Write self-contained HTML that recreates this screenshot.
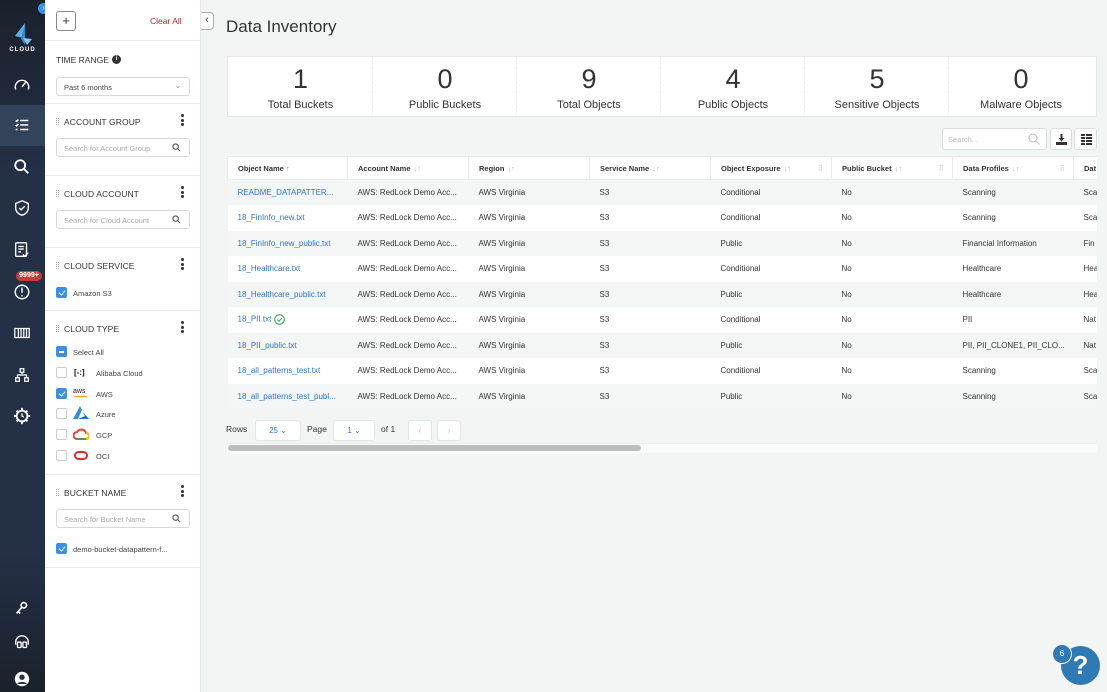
<!DOCTYPE html>
<html><head><meta charset="utf-8"><style>
*{box-sizing:border-box;margin:0;padding:0}
body{width:1107px;height:692px;overflow:hidden;background:#f3f4f4;font-family:"Liberation Sans",sans-serif;color:#333;position:relative}
.a{position:absolute}
#nav{left:0;top:0;width:45px;height:692px;background:linear-gradient(#1b212b 0%,#243046 25%,#243046 80%,#1b212b 100%)}
.ic{position:absolute;left:13px;width:18px;height:18px}
#fp{left:45px;top:0;width:156px;height:692px;background:#fff;border-right:1px solid #e4e6e8}
.hr{position:absolute;left:0;width:155px;height:1px;background:#e8eaeb}
.lbl{position:absolute;left:19px;font-size:8.5px;color:#333;letter-spacing:.1px}
.grip{position:absolute;left:11px;width:3px;height:7px;border-left:1px dotted #aaa;border-right:1px dotted #aaa}
.dots{position:absolute;left:136px;width:3px;font-size:0}
.dots i{display:block;width:3px;height:3px;border-radius:50%;background:#333;margin-bottom:1.5px}
.sb{position:absolute;left:11px;width:134px;height:19px;border:1px solid #d6d9dc;border-radius:3px;font-size:7.5px;color:#aaa;padding:5px 7px}
.sb svg{position:absolute;right:8px;top:4px}
.cb{position:absolute;left:11px;width:11px;height:11px;border:1px solid #ccc;border-radius:2px;background:#fff}
.cb.on{background:#3d8fe6;border-color:#3d8fe6}
.cb.on.k:after{content:"";position:absolute;left:3px;top:1px;width:3px;height:5px;border:solid #fff;border-width:0 1.2px 1.2px 0;transform:rotate(40deg)}
.ct{position:absolute;font-size:7.5px;color:#444}
.card{left:227px;top:56px;width:870px;height:61px;background:#fff;border:1px solid #e6e8e8}
.st{position:absolute;top:0;width:145px;height:61px;text-align:center}
.st b{display:block;font-weight:normal;font-size:27px;color:#333;margin-top:6px;line-height:32px}
.st span{font-size:11px;color:#333}
.st+.st{border-left:1px dashed #ececec}
table{position:absolute;left:227px;top:156px;border-collapse:collapse;font-size:8px;table-layout:fixed;width:880px}
td,th{height:25.5px;padding-left:10px;text-align:left;white-space:nowrap;overflow:hidden;color:#333}
th{height:23px;font-weight:bold;font-size:7.5px;background:#fff;border:1px solid #ececec;border-top:1px solid #e6e8e8}
tr:nth-child(odd) td{background:#fff}
tr:nth-child(even) td{background:#f4f5f5}
td.l{color:#2f74c9}
.s{color:#bbb;font-weight:normal;margin-left:3px}
.g{float:right;margin-right:8px;color:#ccc;font-weight:normal}
.pb{background:#fff;border:1px solid #e3e5e6;border-radius:3px;font-size:8px;color:#2f74c9;text-align:center}
</style></head><body>
<div id="nav" class="a">
 <div class="a" style="left:38px;top:3px;width:11px;height:11px;border-radius:50%;background:#3d8fe6;color:#fff;font-size:7px;text-align:center;line-height:11px">›</div>
 <svg class="a" style="left:13px;top:22px" width="20" height="26" viewBox="0 0 20 26"><path d="M12 1 L2 14 L10 16 Z" fill="#5ab0e6"/><path d="M12 1 L12 23 L8 17 Z" fill="#3a88c8"/><path d="M10 16 L19 17 L14 23 Z" fill="#7cc8f0"/></svg>
 <div class="a" style="left:0;width:45px;top:47px;text-align:center;color:#fff;font-size:6px;letter-spacing:1px;font-weight:bold">CLOUD</div>
 <div class="a" style="left:0;top:105px;width:45px;height:41px;background:#33435a"></div>
 <svg class="ic" style="top:76px" viewBox="0 0 20 20" fill="none" stroke="#fff" stroke-width="1.6"><path d="M3 15 A7.5 7.5 0 1 1 17 15"/><path d="M10 12 L14 7"/></svg>
 <svg class="ic" style="top:116px" viewBox="0 0 20 20" fill="none" stroke="#fff" stroke-width="1.6"><path d="M8 5h9M8 10h9M8 15h9M3 5l1 1 2-2M3 10l1 1 2-2M3 15h2"/></svg>
 <svg class="ic" style="top:158px" viewBox="0 0 20 20" fill="none" stroke="#fff" stroke-width="2"><circle cx="8" cy="8" r="5.5"/><path d="M12 12l5 5"/></svg>
 <svg class="ic" style="top:199px" viewBox="0 0 20 20" fill="none" stroke="#fff" stroke-width="1.5"><path d="M10 2l7 3v5c0 4-3 7-7 8-4-1-7-4-7-8V5z"/><path d="M7 10l2 2 4-4"/></svg>
 <svg class="ic" style="top:241px" viewBox="0 0 20 20" fill="none" stroke="#fff" stroke-width="1.5"><rect x="3" y="2" width="12" height="15" rx="1"/><path d="M6 6h6M6 9h6M6 12h3M11 15l2 2 4-4"/></svg>
 <div class="a" style="left:16px;top:271px;width:26px;height:10px;border-radius:5px;background:#d0393b;color:#fff;font-size:7px;font-weight:bold;text-align:center;line-height:10px">9999+</div>
 <svg class="ic" style="top:283px" viewBox="0 0 20 20" fill="none" stroke="#fff" stroke-width="1.6"><circle cx="10" cy="10" r="7.5"/><path d="M10 5v6M10 13.5v1.5"/></svg>
 <svg class="ic" style="top:324px" viewBox="0 0 20 20" fill="none" stroke="#fff" stroke-width="1.4"><rect x="2" y="5" width="16" height="10"/><path d="M6 5v10M9 5v10M12 5v10M15 5v10"/></svg>
 <svg class="ic" style="top:366px" viewBox="0 0 20 20" fill="none" stroke="#fff" stroke-width="1.4"><rect x="8" y="3" width="4" height="4"/><rect x="3" y="13" width="4" height="4"/><rect x="13" y="13" width="4" height="4"/><path d="M10 7v3M5 13v-3h10v3"/></svg>
 <svg class="ic" style="top:407px" viewBox="0 0 20 20" fill="none" stroke="#fff" stroke-width="2"><circle cx="10" cy="10" r="6"/><path d="M10 1v3M10 16v3M1 10h3M16 10h3M4 4l2 2M14 14l2 2M4 16l2-2M14 6l2-2"/><path d="M10 7v3l2 1" stroke-width="1.4"/></svg>
 <svg class="ic" style="top:599px" viewBox="0 0 20 20" fill="none" stroke="#fff" stroke-width="1.8"><circle cx="12" cy="7" r="3"/><path d="M10 9l-6 7M6 14l2 2"/></svg>
 <svg class="ic" style="top:634px" viewBox="0 0 20 20" fill="none" stroke="#fff" stroke-width="1.5"><path d="M3 12V9a7 7 0 0 1 14 0v3"/><rect x="5" y="9" width="4" height="6" rx="1"/><rect x="11" y="9" width="4" height="6" rx="1"/></svg>
 <svg class="ic" style="top:670px" viewBox="0 0 20 20"><circle cx="10" cy="10" r="8" fill="#fff"/><circle cx="10" cy="8" r="3" fill="#25324a"/><path d="M4.5 15.5c2-3 9-3 11 0" fill="#25324a"/></svg>
</div>

<div id="fp" class="a">
 <div class="a" style="left:11px;top:11px;width:20px;height:20px;border:1px solid #888;border-radius:3px;text-align:center;font-size:13px;line-height:17px;color:#333">+</div>
 <div class="a" style="left:105px;top:16px;font-size:8.5px;color:#b02a2f">Clear All</div>
 <div class="hr" style="top:40px"></div>
 <div class="a" style="left:11px;top:55px;font-size:8.5px">TIME RANGE</div>
 <div class="a" style="left:67px;top:55px;width:9px;height:9px;border-radius:50%;background:#333;color:#fff;font-size:6px;text-align:center;line-height:9px;font-weight:bold">i</div>
 <div class="sb" style="top:77px;color:#444">Past 6 months<span style="position:absolute;right:8px;top:3px;color:#3d8fe6">⌄</span></div>
 <div class="hr" style="top:103px"></div>
 <div class="grip" style="top:118px"></div><div class="lbl" style="top:117px">ACCOUNT GROUP</div>
 <div class="dots" style="top:114px"><i></i><i></i><i></i></div>
 <div class="sb" style="top:138px">Search for Account Group<svg width="9" height="9" viewBox="0 0 10 10" fill="none" stroke="#555" stroke-width="1.2"><circle cx="4" cy="4" r="3"/><path d="M6.3 6.3L9 9"/></svg></div>
 <div class="hr" style="top:175px"></div>
 <div class="grip" style="top:190px"></div><div class="lbl" style="top:189px">CLOUD ACCOUNT</div>
 <div class="dots" style="top:186px"><i></i><i></i><i></i></div>
 <div class="sb" style="top:210px">Search for Cloud Account<svg width="9" height="9" viewBox="0 0 10 10" fill="none" stroke="#555" stroke-width="1.2"><circle cx="4" cy="4" r="3"/><path d="M6.3 6.3L9 9"/></svg></div>
 <div class="hr" style="top:247px"></div>
 <div class="grip" style="top:262px"></div><div class="lbl" style="top:261px">CLOUD SERVICE</div>
 <div class="dots" style="top:258px"><i></i><i></i><i></i></div>
 <div class="cb on k" style="top:287px"></div><div class="ct" style="left:28px;top:289px">Amazon S3</div>
 <div class="hr" style="top:310px"></div>
 <div class="grip" style="top:325px"></div><div class="lbl" style="top:324px">CLOUD TYPE</div>
 <div class="dots" style="top:321px"><i></i><i></i><i></i></div>
 <div class="cb on" style="top:346px"><div style="width:5px;height:1.5px;background:#fff;margin:4px 2px"></div></div><div class="ct" style="left:28px;top:348px">Select All</div>
 <div class="cb" style="top:367px"></div><div class="ct" style="left:29px;top:368px;font-weight:bold;font-size:8px;color:#111">[-:]</div><div class="ct" style="left:51px;top:369px">Alibaba Cloud</div>
 <div class="cb on k" style="top:388px"></div><div class="ct" style="left:28px;top:388px;font-size:7px;color:#222">aws<div style="width:15px;height:2px;border-bottom:1.5px solid #f90;border-radius:50%"></div></div><div class="ct" style="left:51px;top:390px">AWS</div>
 <div class="cb" style="top:408px"></div><svg class="a" style="left:28px;top:406px" width="16" height="14" viewBox="0 0 16 14"><path d="M7 0L0 13h5L9 4z" fill="#3a8bd6"/><path d="M9 5l7 8H5l7-3z" fill="#1f6fc1"/></svg><div class="ct" style="left:51px;top:410px">Azure</div>
 <div class="cb" style="top:429px"></div><svg class="a" style="left:28px;top:428px" width="16" height="12" viewBox="0 0 16 12"><path d="M4 11a3.5 3.5 0 0 1 0-7a5 5 0 0 1 9 1a3 3 0 0 1 0 6z" fill="none" stroke="#ea4335" stroke-width="2"/><path d="M4 11h9" stroke="#34a853" stroke-width="2"/><path d="M13 5a3 3 0 0 1 0 6" stroke="#fbbc05" stroke-width="2" fill="none"/></svg><div class="ct" style="left:51px;top:431px">GCP</div>
 <div class="cb" style="top:450px"></div><div class="a" style="left:29px;top:451px;width:14px;height:9px;border:2px solid #d2332b;border-radius:5px"></div><div class="ct" style="left:51px;top:452px">OCI</div>
 <div class="hr" style="top:474px"></div>
 <div class="grip" style="top:489px"></div><div class="lbl" style="top:488px">BUCKET NAME</div>
 <div class="dots" style="top:485px"><i></i><i></i><i></i></div>
 <div class="sb" style="top:509px">Search for Bucket Name<svg width="9" height="9" viewBox="0 0 10 10" fill="none" stroke="#555" stroke-width="1.2"><circle cx="4" cy="4" r="3"/><path d="M6.3 6.3L9 9"/></svg></div>
 <div class="cb on k" style="top:543px"></div><div class="ct" style="left:28px;top:545px">demo-bucket-datapattern-f...</div>
 <div class="hr" style="top:567px"></div>
</div>
<div class="a" style="left:201px;top:12px;width:13px;height:18px;background:#fff;border:1px solid #aaa;border-left:none;border-radius:0 4px 4px 0;font-size:11px;text-align:center;line-height:15px;color:#333">‹</div>

<div class="a" style="left:226px;top:17px;font-size:17px;color:#333">Data Inventory</div>
<div class="a card">
 <div class="st" style="left:0"><b>1</b><span>Total Buckets</span></div>
 <div class="st" style="left:144px"><b>0</b><span>Public Buckets</span></div>
 <div class="st" style="left:288px"><b>9</b><span>Total Objects</span></div>
 <div class="st" style="left:432px"><b>4</b><span>Public Objects</span></div>
 <div class="st" style="left:576px"><b>5</b><span>Sensitive Objects</span></div>
 <div class="st" style="left:720px"><b>0</b><span>Malware Objects</span></div>
</div>
<div class="a" style="left:942px;top:128px;width:105px;height:22px;background:#fff;border:1px solid #dcdede;border-radius:3px;font-size:7.5px;color:#bbb;padding:6px 5px">Search...<svg style="position:absolute;right:6px;top:4px" width="12" height="12" viewBox="0 0 12 12" fill="none" stroke="#bbb"><circle cx="5" cy="5" r="4"/><path d="M8 8l3.5 3.5"/></svg></div>
<div class="a" style="left:1050px;top:128px;width:22px;height:22px;background:#fff;border:1px solid #dcdede;border-radius:3px"><svg style="margin:5px" width="11" height="11" viewBox="0 0 11 11" fill="#333"><path d="M4.5 0h2v4h2L5.5 7.5 2.5 4h2z"/><path d="M0 8h11v3H0z"/></svg></div>
<div class="a" style="left:1074px;top:128px;width:23px;height:22px;background:#fff;border:1px solid #dcdede;border-radius:3px"><svg style="margin:5px 6px" width="11" height="11" viewBox="0 0 11 11" fill="#333"><path d="M0 0h4v2H0zM5 0h6v2H5zM0 3h4v2H0zM5 3h6v2H5zM0 6h4v2H0zM5 6h6v2H5zM0 9h4v2H0zM5 9h6v2H5z"/></svg></div>

<table>
<colgroup><col style="width:120px"><col style="width:121px"><col style="width:121px"><col style="width:121px"><col style="width:121px"><col style="width:121px"><col style="width:121px"><col style="width:34px"></colgroup>
<tr><th>Object Name <span style="color:#3d8fe6">↑</span></th><th>Account Name<span class="s">↓↑</span></th><th>Region<span class="s">↓↑</span></th><th>Service Name<span class="s">↓↑</span></th><th>Object Exposure<span class="s">↓↑</span><span class="g">⠿</span></th><th>Public Bucket<span class="s">↓↑</span><span class="g">⠿</span></th><th>Data Profiles<span class="s">↓↑</span><span class="g">⠿</span></th><th>Dat</th></tr>
<tr><td class="l">README_DATAPATTER...</td><td>AWS: RedLock Demo Acc...</td><td>AWS Virginia</td><td>S3</td><td>Conditional</td><td>No</td><td>Scanning</td><td>Sca</td></tr>
<tr><td class="l">18_FinInfo_new.txt</td><td>AWS: RedLock Demo Acc...</td><td>AWS Virginia</td><td>S3</td><td>Conditional</td><td>No</td><td>Scanning</td><td>Sca</td></tr>
<tr><td class="l">18_FinInfo_new_public.txt</td><td>AWS: RedLock Demo Acc...</td><td>AWS Virginia</td><td>S3</td><td>Public</td><td>No</td><td>Financial Information</td><td>Fin</td></tr>
<tr><td class="l">18_Healthcare.txt</td><td>AWS: RedLock Demo Acc...</td><td>AWS Virginia</td><td>S3</td><td>Conditional</td><td>No</td><td>Healthcare</td><td>Hea</td></tr>
<tr><td class="l">18_Healthcare_public.txt</td><td>AWS: RedLock Demo Acc...</td><td>AWS Virginia</td><td>S3</td><td>Public</td><td>No</td><td>Healthcare</td><td>Hea</td></tr>
<tr><td class="l">18_PII.txt <svg width="11" height="11" viewBox="0 0 12 12" style="vertical-align:middle" fill="none" stroke="#3aa757" stroke-width="1.2"><circle cx="6" cy="6" r="5.2"/><path d="M3.5 6l2 2 3-3.5"/></svg></td><td>AWS: RedLock Demo Acc...</td><td>AWS Virginia</td><td>S3</td><td>Conditional</td><td>No</td><td>PII</td><td>Nat</td></tr>
<tr><td class="l">18_PII_public.txt</td><td>AWS: RedLock Demo Acc...</td><td>AWS Virginia</td><td>S3</td><td>Public</td><td>No</td><td>PII, PII_CLONE1, PII_CLO...</td><td>Nat</td></tr>
<tr><td class="l">18_all_patterns_test.txt</td><td>AWS: RedLock Demo Acc...</td><td>AWS Virginia</td><td>S3</td><td>Conditional</td><td>No</td><td>Scanning</td><td>Sca</td></tr>
<tr><td class="l">18_all_patterns_test_publ...</td><td>AWS: RedLock Demo Acc...</td><td>AWS Virginia</td><td>S3</td><td>Public</td><td>No</td><td>Scanning</td><td>Sca</td></tr>
</table>
<div class="a" style="left:1097px;top:156px;width:10px;height:254px;background:#f3f4f4"></div>

<div class="a" style="left:226px;top:424px;font-size:8.5px">Rows</div>
<div class="a pb" style="left:255px;top:420px;width:46px;height:21px;line-height:20px">25 ⌄</div>
<div class="a" style="left:307px;top:424px;font-size:8.5px">Page</div>
<div class="a pb" style="left:333px;top:420px;width:42px;height:21px;line-height:20px">1 ⌄</div>
<div class="a" style="left:381px;top:424px;font-size:8.5px">of 1</div>
<div class="a pb" style="left:408px;top:420px;width:24px;height:21px;line-height:20px;color:#bbb">‹</div>
<div class="a pb" style="left:437px;top:420px;width:24px;height:21px;line-height:20px;color:#bbb">›</div>
<div class="a" style="left:227px;top:443px;width:870px;height:10px;background:#fafafa;border-top:1px solid #ececec"></div>
<div class="a" style="left:228px;top:445px;width:413px;height:6px;border-radius:3px;background:#bdbdbd"></div>

<div class="a" style="left:1061px;top:646px;width:39px;height:39px;border-radius:50%;background:#2f7ab5;color:#fff;font-size:26px;font-weight:bold;text-align:center;line-height:39px">?</div>
<div class="a" style="left:1052px;top:644px;width:20px;height:20px;border-radius:50%;background:#2f7ab5;border:1px solid #f3f4f4;color:#fff;font-size:8px;text-align:center;line-height:18px">6</div>
</body></html>
